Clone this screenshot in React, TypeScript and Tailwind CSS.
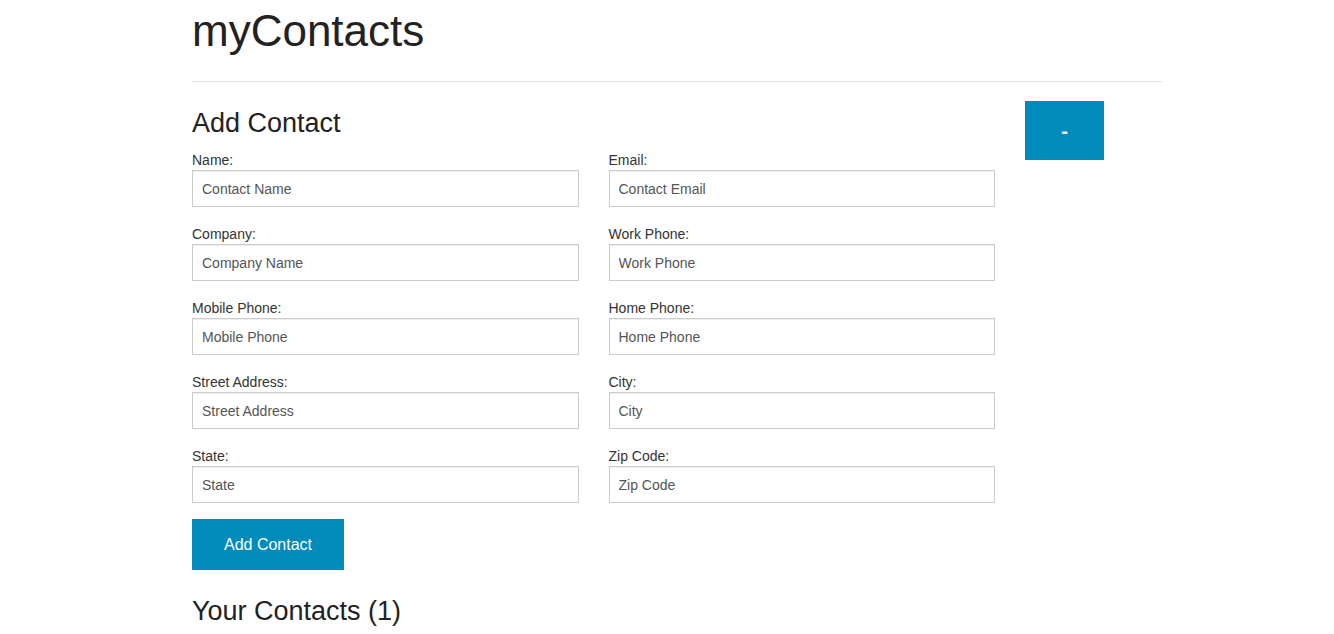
const fields = [
    ["Name:", "Contact Name", "Email:", "Contact Email"],
    ["Company:", "Company Name", "Work Phone:", "Work Phone"],
    ["Mobile Phone:", "Mobile Phone", "Home Phone:", "Home Phone"],
    ["Street Address:", "Street Address", "City:", "City"],
    ["State:", "State", "Zip Code:", "Zip Code"],
];

function Field({ label, placeholder }: { label: string; placeholder: string }) {
    return (
        <div className="flex flex-col">
            <label className="text-[14px] leading-[20px] text-[#333]">{label}</label>
            <input
                placeholder={placeholder}
                className="h-[37px] w-full border border-[#ccc] px-[9px] text-[14px] text-[#555] placeholder:text-[#555] shadow-[inset_0_1px_1px_rgba(0,0,0,0.075)] outline-none"
            />
        </div>
    );
}

export default function App() {
    return (
        <div className="min-h-[634px] bg-white font-['Liberation_Sans',Arial,sans-serif] text-[#333]">
            <div className="ml-[192px] w-[970px] pt-[7px]">
                <h1 className="text-[44px] leading-[48px] text-[#222]">myContacts</h1>
                <hr className="mt-[26px] border-0 border-t border-[#e0e0e0]" />
                <div className="flex gap-[30px]">
                    <div className="w-[803px]">
                        <h3 className="mt-[26px] text-[27px] leading-[30px] text-[#222]">Add Contact</h3>
                        <div className="mt-[12px] grid grid-cols-2 gap-x-[30px] gap-y-[17px]">
                            {fields.map((row, i) => (
                                <div key={i} className="contents">
                                    <Field label={row[0]} placeholder={row[1]} />
                                    <Field label={row[2]} placeholder={row[3]} />
                                </div>
                            ))}
                        </div>
                        <button className="mt-[16px] h-[51px] w-[152px] bg-[#008bba] text-[16px] text-white">
                            Add Contact
                        </button>
                        <h3 className="mt-[26px] text-[27px] leading-[30px] text-[#222]">Your Contacts (1)</h3>
                    </div>
                    <div>
                        <button className="mt-[19px] h-[59px] w-[79px] bg-[#008bba] text-[20px] font-bold text-white">-</button>
                    </div>
                </div>
            </div>
        </div>
    );
}
